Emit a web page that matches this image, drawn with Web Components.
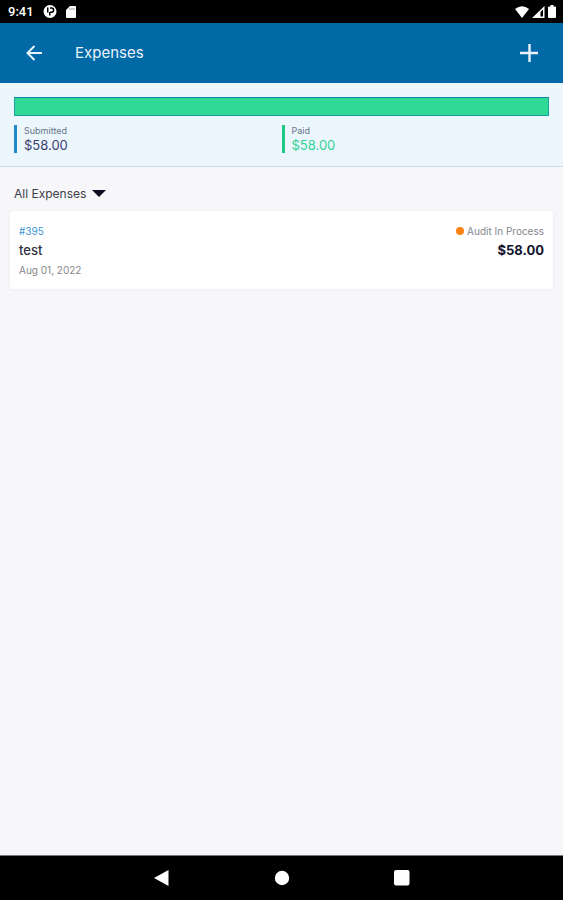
<!DOCTYPE html>
<html lang="en">
<head>
<meta charset="utf-8">
<meta name="viewport" content="width=device-width, initial-scale=1">
<title>Expenses</title>
<style>
  body {
    margin: 0;
    background: #f7f7fa;
    font-family: Inter, "Liberation Sans", sans-serif;
    color: #2f3140;
  }
</style>
</head>
<body>
<expense-app></expense-app>

<script>
class StatusBar extends HTMLElement {
    constructor() {
        super();
        this.shadowDOM = this.attachShadow({mode: "open"});
    }

    connectedCallback() {
        this.shadowDOM.innerHTML = `
        <style>
        :host {
            display: flex;
            align-items: center;
            justify-content: space-between;
            height: 23px;
            padding: 0 7px 0 8px;
            background: #000;
            color: #fff;
            font: 500 13px Roboto, sans-serif;
        }
        .group {
            display: flex;
            align-items: center;
        }
        .notices {
            gap: 9px;
        }
        .signals {
            gap: 3px;
        }
        svg {
            display: block;
            fill: #fff;
        }
        </style>
        <div class="group notices">
            <span class="time">9:41</span>
            <svg width="14" height="13" viewBox="0 0 14 13"><circle cx="7" cy="6.500" r="6.500"/><path d="M7 3h1.500a2 2 0 0 1 0 4.200H7" fill="none" stroke="#000" stroke-width="1.500"/><path d="M4 2.500h1.500v5H4zM6 7h1.500v3.500H6z" fill="#000"/></svg>
            <svg width="10" height="12" viewBox="0 0 10 12"><path d="M4 0h5a1 1 0 0 1 1 1v10a1 1 0 0 1-1 1H1a1 1 0 0 1-1-1V4z"/><path d="M4 2v2M6 2v2M8 2v2" stroke="#999" stroke-width="1"/></svg>
        </div>
        <div class="group signals">
            <svg width="14" height="12" viewBox="0 0 14 12"><path d="M0 3Q7-2.500 14 3L7 12z"/></svg>
            <svg width="13" height="12" viewBox="0 0 13 12"><path d="M12.500 0v12H0z"/><path d="M8.500 6l2.500-2.500V10.500H8.500z" fill="#000"/></svg>
            <svg width="8" height="13" viewBox="0 0 8 13"><path d="M2.500 0h3v1.500H7a1 1 0 0 1 1 1V12a1 1 0 0 1-1 1H1a1 1 0 0 1-1-1V2.500a1 1 0 0 1 1-1h1.500z"/></svg>
        </div>`;
    }
}

class AppHeader extends HTMLElement {
    constructor() {
        super();
        this.shadowDOM = this.attachShadow({mode: "open"});
    }

    connectedCallback() {
        this.shadowDOM.innerHTML = `
        <style>
        :host {
            display: flex;
            align-items: center;
            height: 60px;
            padding: 0 14px;
            background: #0069a6;
            color: #e9f3fb;
        }
        h1 {
            flex: 1;
            margin: 0 0 0 21px;
            font-size: 15px;
            line-height: 20px;
            font-weight: 400;
        }
        button {
            display: grid;
            place-items: center;
            width: 40px;
            height: 40px;
            padding: 0;
            border: 0;
            background: none;
            color: inherit;
        }
        svg {
            fill: none;
            stroke: currentColor;
            stroke-width: 2;
        }
        </style>
        <button type="button" aria-label="Back">
            <svg width="16" height="16" viewBox="0 0 16 16"><path d="M16 8H2M8.500 1L1.500 8l7 7"/></svg>
        </button>
        <h1><slot></slot></h1>
        <button type="button" aria-label="Add expense">
            <svg width="18" height="18" viewBox="0 0 18 18"><path d="M9.500 0v18M0 9h18" stroke-width="2.400"/></svg>
        </button>`;
    }
}

class SummaryStat extends HTMLElement {
    constructor() {
        super();
        this.shadowDOM = this.attachShadow({mode: "open"});
    }

    connectedCallback() {
        this.shadowDOM.innerHTML = `
        <style>
        :host {
            display: block;
            padding-left: 7px;
            border-left: 3px solid var(--stat-line);
        }
        .label {
            font-size: 9px;
            line-height: 12px;
            color: #687487;
        }
        .amount {
            font-size: 13px;
            line-height: 16px;
            color: var(--stat-text);
        }
        </style>
        <div class="label">${this.getAttribute("label")}</div>
        <div class="amount"><slot></slot></div>`;
    }
}

class ExpenseSummary extends HTMLElement {
    constructor() {
        super();
        this.shadowDOM = this.attachShadow({mode: "open"});
    }

    connectedCallback() {
        this.shadowDOM.innerHTML = `
        <style>
        :host {
            display: block;
            padding: 14px 14px 13px;
            border-bottom: 1px solid #c8dbe2;
            background: #ecf6fd;
        }
        .bar {
            box-sizing: border-box;
            height: 19px;
            border: 1px solid #1c9fa5;
            border-top-color: #0f83a6;
            background: #30da96;
        }
        .stats {
            display: grid;
            grid-template-columns: 1fr 1fr;
            margin-top: 9px;
        }
        </style>
        <div class="bar"></div>
        <div class="stats"><slot></slot></div>`;
    }
}

class ExpenseFilter extends HTMLElement {
    constructor() {
        super();
        this.shadowDOM = this.attachShadow({mode: "open"});
    }

    connectedCallback() {
        this.shadowDOM.innerHTML = `
        <style>
        :host {
            display: flex;
            padding: 16px 14px 8px;
        }
        label {
            display: flex;
            align-items: center;
            gap: 5px;
        }
        select {
            appearance: none;
            height: 20px;
            padding: 0;
            border: 0;
            background: none;
            font: 400 12px Inter, "Liberation Sans", sans-serif;
            color: #3c3d48;
        }
        </style>
        <label>
            <select aria-label="Filter expenses">
                <option>All Expenses</option>
            </select>
            <svg width="14" height="7" viewBox="0 0 14 7"><path d="M0 0h14L7 7z" fill="#0c0d20"/></svg>
        </label>`;
    }
}

class ExpenseCard extends HTMLElement {
    constructor() {
        super();
        this.shadowDOM = this.attachShadow({mode: "open"});
    }

    connectedCallback() {
        this.shadowDOM.innerHTML = `
        <style>
        :host {
            display: flex;
            justify-content: space-between;
            margin: 0 10px;
            padding: 11px 9px 10px;
            border-radius: 3px;
            background: #fff;
            box-shadow: 0 0 4px rgba(40, 50, 90, 0.05);
        }
        .column {
            display: flex;
            flex-direction: column;
        }
        .end {
            align-items: flex-end;
        }
        .number, .status, .date {
            font-size: 10px;
            line-height: 18px;
            color: #85868c;
        }
        .number {
            color: #3c94d6;
            text-decoration: none;
        }
        .status {
            display: flex;
            align-items: center;
            gap: 3px;
        }
        .status::before {
            content: "";
            width: 8px;
            height: 8px;
            border-radius: 50%;
            background: #fd8412;
        }
        .title, .amount {
            font-size: 13px;
            line-height: 21px;
        }
        .title {
            font-weight: 500;
        }
        .amount {
            font-weight: 700;
            color: #12122e;
        }
        </style>
        <div class="column">
            <a class="number" href="#395"><slot name="number"></slot></a>
            <span class="title"><slot name="title"></slot></span>
            <span class="date"><slot name="date"></slot></span>
        </div>
        <div class="column end">
            <span class="status"><slot name="status"></slot></span>
            <span class="amount"><slot name="amount"></slot></span>
        </div>`;
    }
}

class SystemNav extends HTMLElement {
    constructor() {
        super();
        this.shadowDOM = this.attachShadow({mode: "open"});
    }

    connectedCallback() {
        this.shadowDOM.innerHTML = `
        <style>
        :host {
            display: flex;
            align-items: center;
            justify-content: center;
            gap: 80px;
            height: 44px;
            border-top: 1px solid #77787b;
            background: #000;
        }
        button {
            display: grid;
            place-items: center;
            width: 40px;
            height: 40px;
            padding: 0;
            border: 0;
            background: none;
        }
        svg {
            fill: #fff;
        }
        </style>
        <button type="button" aria-label="Back">
            <svg width="16" height="16" viewBox="0 0 16 16"><path d="M14.500 0v16L0 8z"/></svg>
        </button>
        <button type="button" aria-label="Home">
            <svg width="16" height="16" viewBox="0 0 16 16"><circle cx="8" cy="8" r="7.200"/></svg>
        </button>
        <button type="button" aria-label="Recent apps">
            <svg width="16" height="16" viewBox="0 0 16 16"><rect width="15.500" height="15.500" rx="2"/></svg>
        </button>`;
    }
}

class ExpenseApp extends HTMLElement {
    constructor() {
        super();
        this.shadowDOM = this.attachShadow({mode: "open"});
    }

    connectedCallback() {
        this.shadowDOM.innerHTML = `
        <style>
        :host {
            display: flex;
            flex-direction: column;
            min-height: 100vh;
        }
        main {
            flex: 1;
        }
        .submitted {
            --stat-line: #2489c9;
            --stat-text: #3a4270;
        }
        .paid {
            --stat-line: #20c985;
            --stat-text: #35d396;
        }
        </style>
        <status-bar></status-bar>
        <app-header>Expenses</app-header>
        <main>
            <expense-summary>
                <summary-stat class="submitted" label="Submitted">$58.00</summary-stat>
                <summary-stat class="paid" label="Paid">$58.00</summary-stat>
            </expense-summary>
            <expense-filter></expense-filter>
            <expense-card>
                <span slot="number">#395</span>
                <span slot="title">test</span>
                <span slot="date">Aug 01, 2022</span>
                <span slot="status">Audit In Process</span>
                <span slot="amount">$58.00</span>
            </expense-card>
        </main>
        <system-nav></system-nav>`;
    }
}

customElements.define("status-bar", StatusBar);
customElements.define("app-header", AppHeader);
customElements.define("summary-stat", SummaryStat);
customElements.define("expense-summary", ExpenseSummary);
customElements.define("expense-filter", ExpenseFilter);
customElements.define("expense-card", ExpenseCard);
customElements.define("system-nav", SystemNav);
customElements.define("expense-app", ExpenseApp);
</script>
</body>
</html>
